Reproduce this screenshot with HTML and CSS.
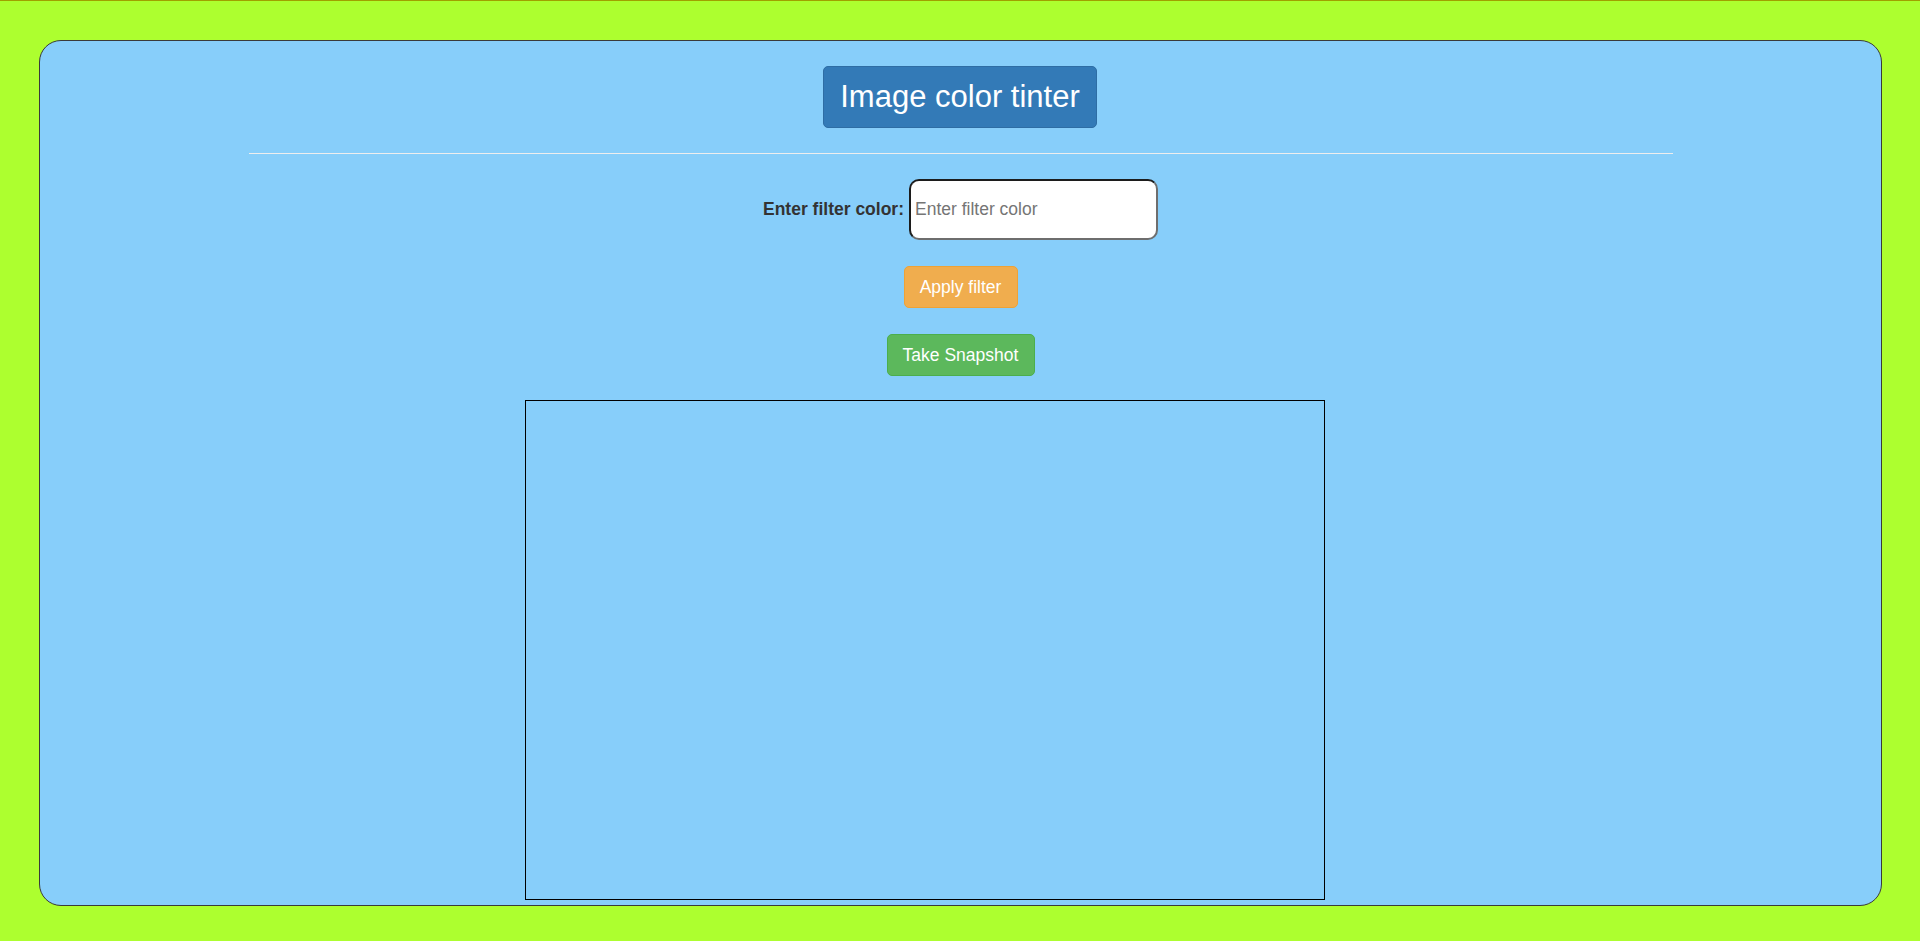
FILE: index.html
```html
<!DOCTYPE html>
<html lang="en">
<head>
<meta charset="utf-8">
<title>Image color tinter</title>
<link rel="stylesheet" href="styles.css">
</head>
<body>
<main class="panel">
  <h1 class="title">Image color tinter</h1>
  <hr class="rule">
  <div class="filter-row">
    <label class="filter-label" for="color">Enter filter color:</label>
    <input class="filter-input" id="color" type="text" placeholder="Enter filter color">
  </div>
  <button class="btn btn-warning" type="button">Apply filter</button>
  <button class="btn btn-success" type="button">Take Snapshot</button>
  <div class="canvas-box"></div>
</main>
</body>
</html>
```
FILE: styles.css
```css
* { box-sizing: border-box; }
html, body { height: 100%; }
body {
  margin: 0;
  background: #adff2f;
  border-top: 1px solid #a0a000;
  font-family: "Liberation Sans", Arial, sans-serif;
  overflow: hidden;
}
.panel {
  margin: 39px 38px 0 39px;
  height: 866px;
  background: #87cefa;
  border: 1px solid #3a3a3a;
  border-radius: 22px;
  padding-top: 25px;
  display: flex;
  flex-direction: column;
  align-items: center;
}
.panel > * { flex-shrink: 0; }
.title {
  margin: 0 1px 0 0;
  background: #337ab7;
  border: 1px solid #2e6da4;
  border-radius: 5px;
  color: #fff;
  font-weight: normal;
  font-size: 31px;
  line-height: 40px;
  padding: 10px 16px;
  white-space: nowrap;
  min-width: 274px;
  text-align: center;
}
.rule {
  margin: 25px 0 0;
  width: 1424px;
  border: 0;
  border-top: 1px solid #eeeeee;
  height: 0;
}
.filter-row {
  margin-top: 25px;
  display: flex;
  align-items: center;
  gap: 5px;
}
.filter-label {
  font-weight: bold;
  font-size: 17.5px;
  color: #333;
}
.filter-input {
  width: 249px;
  height: 61px;
  border: 2px solid;
  border-color: #1c1c1c #6e6e6e #6e6e6e #1c1c1c;
  border-radius: 10px;
  background: #fff;
  font-family: "Liberation Sans", Arial, sans-serif;
  font-size: 17.5px;
  padding: 0 4px;
}
.filter-input::placeholder { color: #757575; }
.btn {
  margin-top: 26px;
  height: 42px;
  padding: 0 15px;
  border-radius: 5px;
  border: 1px solid;
  color: #fff;
  font-family: "Liberation Sans", Arial, sans-serif;
  font-size: 17.5px;
  line-height: 25px;
}
.btn-warning { background: #f0ad4e; border-color: #eea236; width: 114px; }
.btn-success { background: #5cb85c; border-color: #4cae4c; width: 148px; }
.canvas-box {
  margin-top: 24px;
  margin-right: 72px;
  width: 800px;
  height: 500px;
  border: 1px solid #000;
}
```
